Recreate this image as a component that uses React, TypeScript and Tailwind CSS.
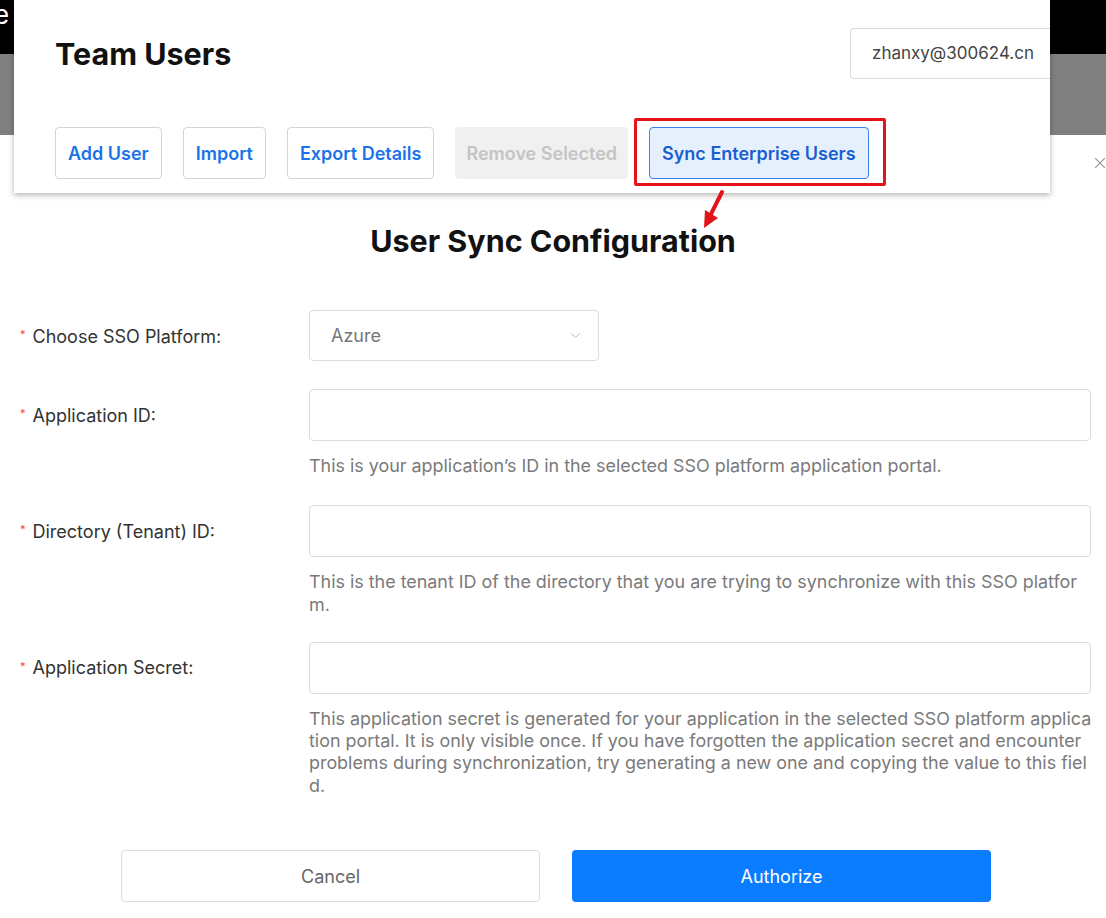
import { ChevronDown, X } from 'lucide-react';

const fontStack = { fontFamily: 'Inter, "Noto Sans", "Liberation Sans", sans-serif' };

/* help text is wrapped by the original dialog mid-word, so keep its lines as given */
const fields = [
  {
    label: 'Application ID:',
    help: ['This is your application’s ID in the selected SSO platform application portal.'],
    gap: 'mb-[28px]',
  },
  {
    label: 'Directory (Tenant) ID:',
    help: [
      'This is the tenant ID of the directory that you are trying to synchronize with this SSO platfor',
      'm.',
    ],
    gap: 'mb-[26px]',
  },
  {
    label: 'Application Secret:',
    help: [
      'This application secret is generated for your application in the selected SSO platform applica',
      'tion portal. It is only visible once. If you have forgotten the application secret and encounter',
      'problems during synchronization, try generating a new one and copying the value to this fiel',
      'd.',
    ],
    gap: 'mb-[53px]',
  },
];

function Label({ text }: { text: string }) {
  return (
    <div className="w-[309px] shrink-0 pl-[20px] flex items-center h-[52px] text-[18px] text-[#333]">
      <span className="text-[#f04848] text-[11px] self-start mt-[16px] mr-[7px]">*</span>
      {text}
    </div>
  );
}

export default function App() {
  return (
    <div className="relative w-[1106px] h-[918px] bg-white overflow-hidden" style={fontStack}>
      {/* page behind the dialog */}
      <div className="h-[54px] bg-black text-white text-[26px] leading-none -ml-[6px] pt-[2px]">e</div>
      <div className="h-[81px] bg-[#808080]" />

      {/* dialog */}
      <div className="relative pt-[91px]">
        <button className="absolute -right-[3px] top-[19px] text-[#9a9a9a]" aria-label="Close">
          <X size={18} strokeWidth={1.5} />
        </button>

        <h2 className="text-center text-[30.5px] font-bold text-[#111] leading-[30px]">
          User Sync Configuration
        </h2>

        <div className="mt-[54px]">
          {/* SSO platform select */}
          <div className="flex mb-[27px]">
            <Label text="Choose SSO Platform:" />
            <div className="w-[290px] h-[51px] border border-[#dcdcdc] rounded-[4px] flex items-center justify-between pl-[21px] pr-[14px] text-[18px] text-[#777]">
              Azure
              <ChevronDown size={17} strokeWidth={1.2} className="text-[#b0b0b0]" />
            </div>
          </div>

          {fields.map((f) => (
            <div key={f.label} className={`flex ${f.gap}`}>
              <Label text={f.label} />
              <div className="w-[782px]">
                <div className="h-[52px] border border-[#dcdcdc] rounded-[4px]" />
                <div className="mt-[14px] text-[17.9px] leading-[22.3px] text-[#7a7a7a] whitespace-nowrap">
                  {f.help.map((l) => (
                    <div key={l}>{l}</div>
                  ))}
                </div>
              </div>
            </div>
          ))}

          <div className="flex gap-[32px] pl-[121px]">
            <button className="w-[419px] h-[52px] border border-[#dcdcdc] rounded-[4px] text-[18px] text-[#666]">
              Cancel
            </button>
            <button className="w-[419px] h-[52px] rounded-[4px] bg-[#0a7cff] text-[18px] text-white">
              Authorize
            </button>
          </div>
        </div>
      </div>

      {/* overlaid screenshot of the Team Users card */}
      <div className="absolute left-[14px] top-0 w-[1036px] h-[193px] bg-white shadow-[0_2px_6px_rgba(0,0,0,0.3)]">
        <div className="flex items-start justify-between pl-[41px] pt-[28px]">
          <h1 className="text-[30.5px] font-bold text-[#111] leading-[52px]">Team Users</h1>
          <div className="w-[200px] h-[51px] border border-[#dcdcdc] border-r-0 rounded-l-[4px] flex items-center pl-[21px] text-[17px] text-[#444]">
            zhanxy@300624.cn
          </div>
        </div>
        <div className="flex gap-[21px] pl-[41px] mt-[47px]">
          {['Add User', 'Import', 'Export Details'].map((b) => (
            <button
              key={b}
              className="h-[52px] px-[12px] border border-[#d4d4d4] rounded-[4px] text-[18px] font-semibold text-[#1a73e8]"
            >
              {b}
            </button>
          ))}
          <button className="h-[52px] px-[11px] rounded-[4px] bg-[#f0f0f0] text-[18px] font-semibold text-[#c4c4c4]">
            Remove Selected
          </button>
          <button className="h-[52px] px-[12px] border border-[#3a82f0] rounded-[4px] bg-[#e6f0fd] text-[18px] font-semibold text-[#1a5fd0]">
            Sync Enterprise Users
          </button>
        </div>
      </div>

      {/* red annotation */}
      <div className="absolute left-[634px] top-[118px] w-[252px] h-[68px] border-[3px] border-[#e3131c] rounded-[2px]" />
      <svg className="absolute left-[696px] top-[188px]" width="34" height="44" viewBox="0 0 34 44">
        <path d="M26 4 L14 28" stroke="#e3131c" strokeWidth="4" strokeLinecap="round" />
        <path d="M8 40 L9 22 L22 30 Z" fill="#e3131c" />
      </svg>
    </div>
  );
}
